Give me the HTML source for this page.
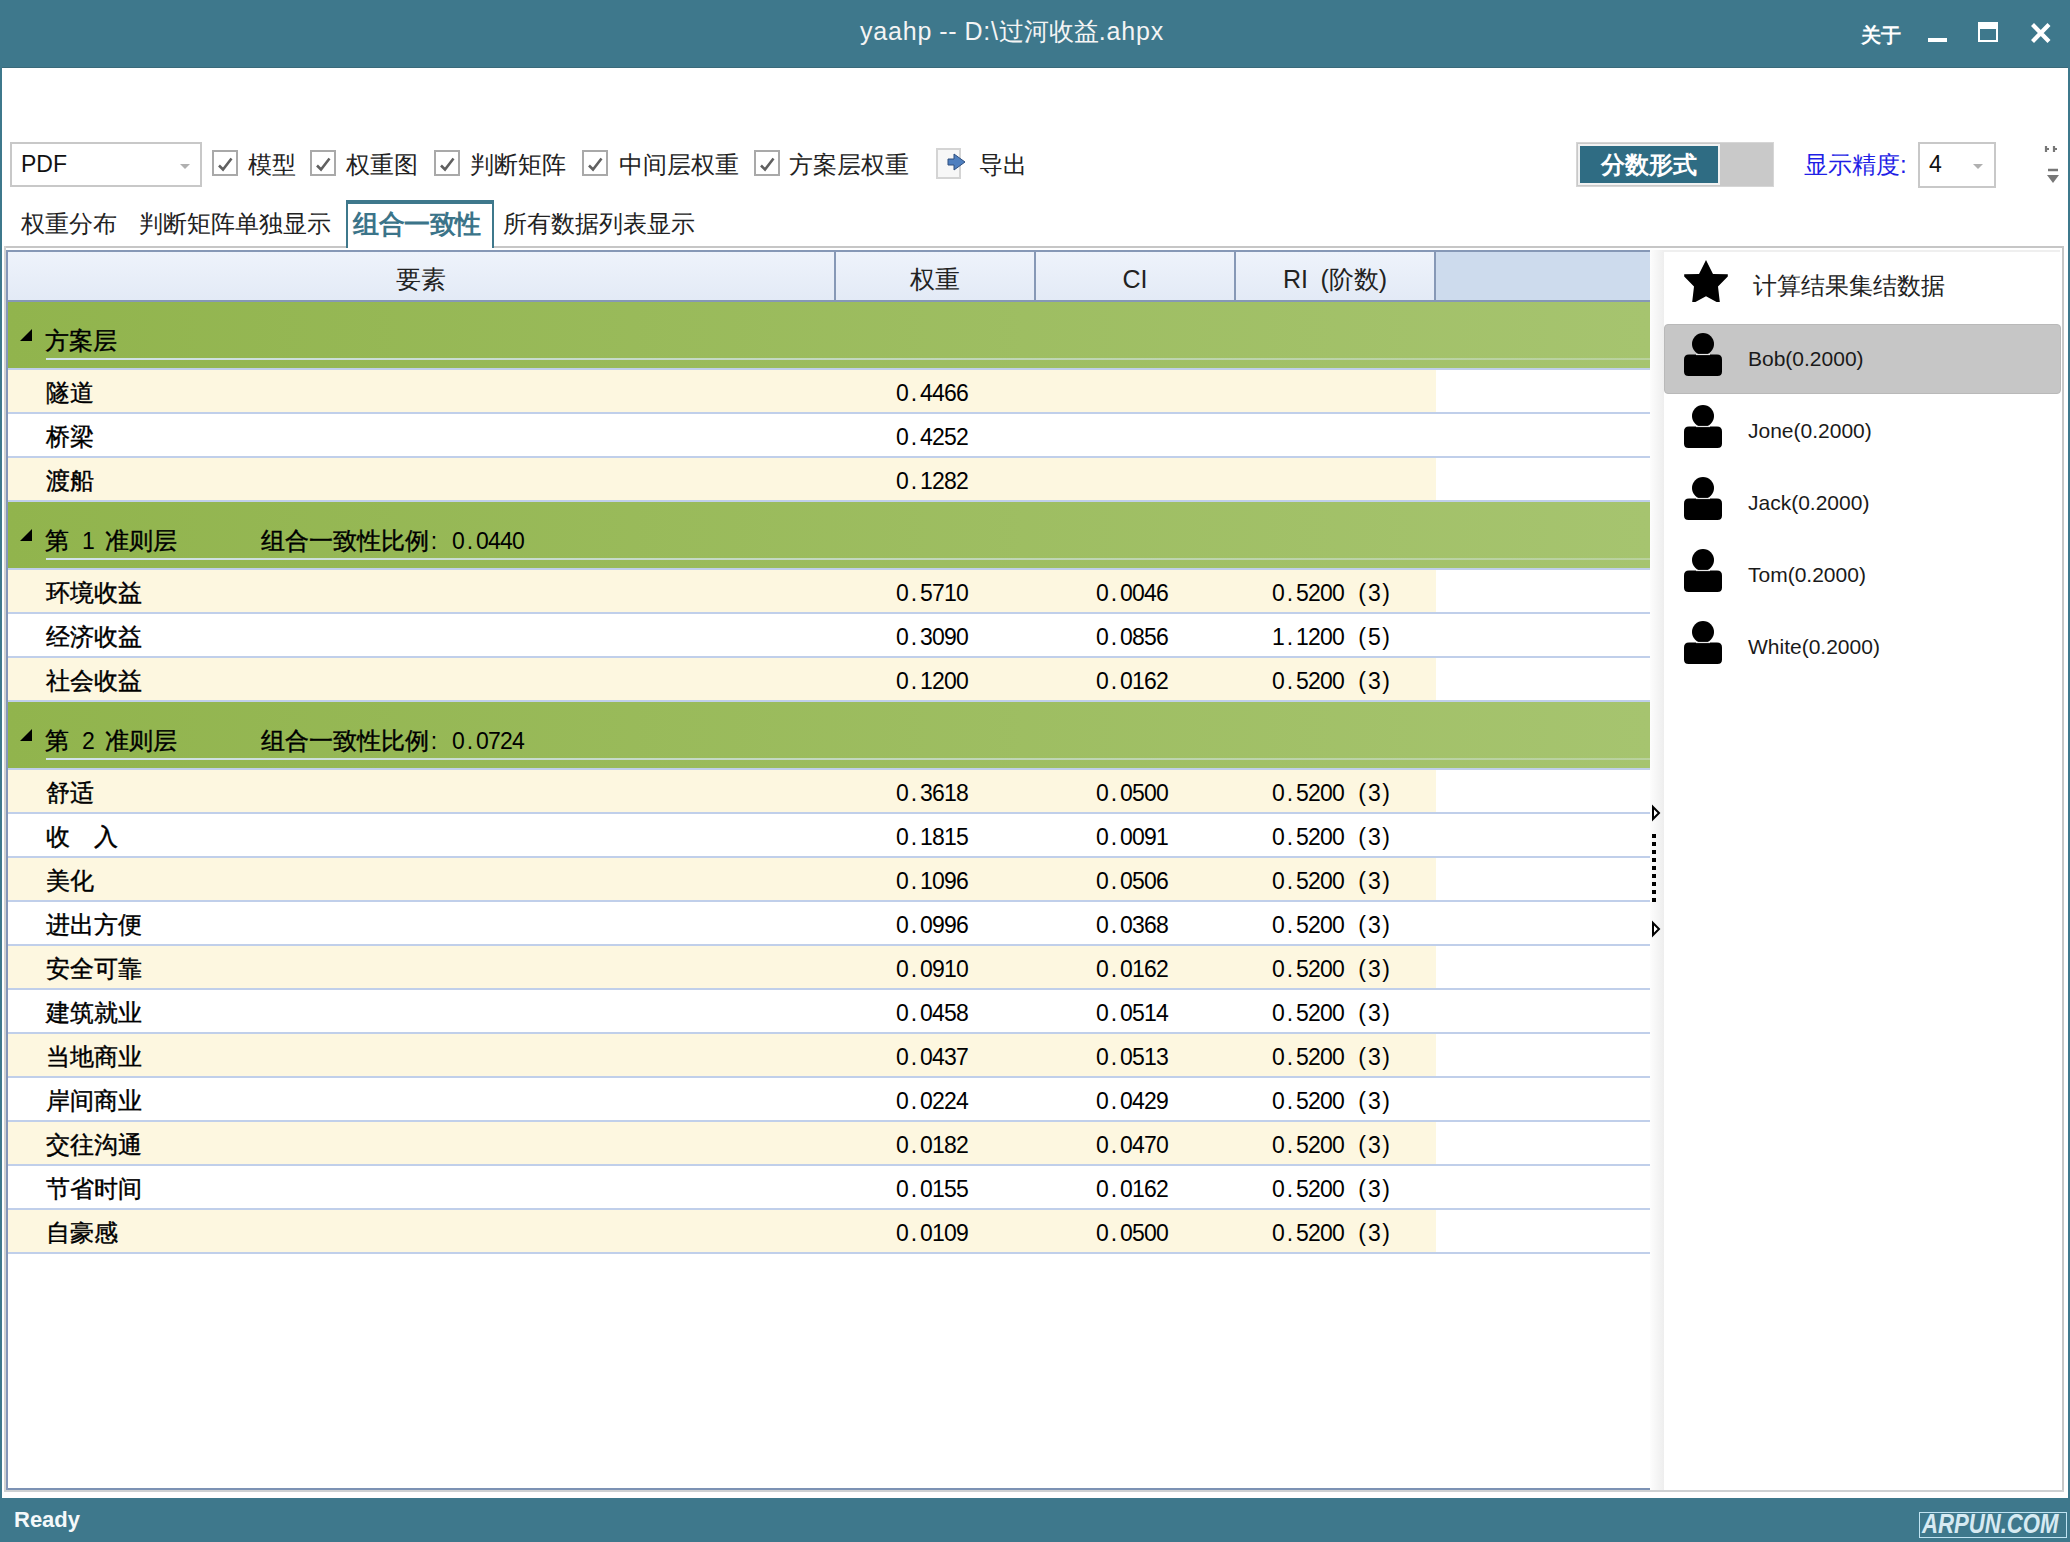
<!DOCTYPE html>
<html><head><meta charset="utf-8"><title>yaahp</title><style>
*{margin:0;padding:0}
html,body{width:2070px;height:1542px;overflow:hidden;background:#fff}
body{position:relative;font-family:"Liberation Sans",sans-serif;color:#000}
.b{position:absolute;display:block}
.t{position:absolute;white-space:nowrap;line-height:28px}
i{font-style:normal}
.k{display:inline-block;width:1em;text-align:center;transform:translateY(-1px) scale(1.55,1.36);-webkit-text-stroke:.5px currentColor}
.td .k,.num .k{-webkit-text-stroke:1px currentColor}
.cjk .k{transform:none;-webkit-text-stroke:0}
.cjk .td .k{transform:none;-webkit-text-stroke:.4px currentColor}
.sp{display:inline-block;width:.5em}
.title{color:#f4f4f4;font-size:25px;line-height:30px;letter-spacing:.8px}
.title .sp{width:.28em}
.tb{color:#fff;font-size:20px;font-weight:bold}
.pdf{font-size:23px;color:#111}
.tl{font-size:24px;color:#222}
.tog{font-size:24px;color:#fff;font-weight:bold}
.blue{font-size:24px;color:#1f1fe6}
.tab{font-size:24px;color:#222}
.tab.sel{color:#3b7489;font-weight:bold;font-size:25.6px}
.th{font-size:25px;color:#222}
.td{font-size:24px;color:#000}
.num{font-size:23px;color:#000}
.num b{display:inline-block;width:12px;text-align:center;font-weight:normal}
.rp{font-size:24px;color:#222}
.pn{font-size:21px;color:#1a1a1a}
.ready{font-size:22px;font-weight:bold;color:#f4f8fa}
.wm{font-size:27px;font-weight:bold;font-style:italic;color:#d6eaf2;line-height:26px;transform:scaleX(.82);transform-origin:0 0}
</style></head><body>
<div class="b" style="left:0px;top:0px;width:2070px;height:1542px;background:#3e788c"></div>
<div class="b" style="left:2px;top:68px;width:2066px;height:1430px;background:#fff"></div>
<div class="b" style="left:2px;top:67px;width:2066px;height:1px;background:#3a6a7a"></div>
<div class="t title" style="left:0;width:2024px;top:16px;text-align:center">yaahp<i class="sp"> </i>--<i class="sp"> </i>D:\<i class="k">过</i><i class="k">河</i><i class="k">收</i><i class="k">益</i>.ahpx</div>
<div class="t tb" style="left:1861px;top:21px;"><i class="k">关</i><i class="k">于</i></div>
<div class="b" style="left:1928px;top:38px;width:19px;height:4px;background:#fff"></div>
<div class="b" style="left:1978px;top:22px;width:20px;height:20px;border:2px solid #fff;border-top-width:7px;box-sizing:border-box"></div>
<svg class="b" style="left:2031px;top:23px" width="20" height="20" viewBox="0 0 20 20"><path d="M1.5 1.5 L18 18.5 M18 1.5 L1.5 18.5" stroke="#fff" stroke-width="4.2"/></svg>
<div class="b" style="left:10px;top:142px;width:192px;height:45px;border:2px solid #c8c8c8;box-sizing:border-box;background:#fff"></div>
<div class="t pdf" style="left:21px;top:150px;">PDF</div>
<svg class="b" style="left:179px;top:163px" width="12" height="7"><path d="M1 1 L11 1 L6 6 Z" fill="#b0b0b0"/></svg>
<div class="b" style="left:212px;top:150px;width:26px;height:26px;border:2px solid #a9a9a9;box-sizing:border-box;background:#fff"></div>
<svg class="b" style="left:212px;top:150px" width="26" height="26"><path d="M7 15.5 L11 19.5 L19.5 8.5" stroke="#606060" stroke-width="2.6" fill="none"/></svg>
<div class="t tl" style="left:248px;top:151px;"><i class="k">模</i><i class="k">型</i></div>
<div class="b" style="left:310px;top:150px;width:26px;height:26px;border:2px solid #a9a9a9;box-sizing:border-box;background:#fff"></div>
<svg class="b" style="left:310px;top:150px" width="26" height="26"><path d="M7 15.5 L11 19.5 L19.5 8.5" stroke="#606060" stroke-width="2.6" fill="none"/></svg>
<div class="t tl" style="left:346px;top:151px;"><i class="k">权</i><i class="k">重</i><i class="k">图</i></div>
<div class="b" style="left:434px;top:150px;width:26px;height:26px;border:2px solid #a9a9a9;box-sizing:border-box;background:#fff"></div>
<svg class="b" style="left:434px;top:150px" width="26" height="26"><path d="M7 15.5 L11 19.5 L19.5 8.5" stroke="#606060" stroke-width="2.6" fill="none"/></svg>
<div class="t tl" style="left:470px;top:151px;"><i class="k">判</i><i class="k">断</i><i class="k">矩</i><i class="k">阵</i></div>
<div class="b" style="left:582px;top:150px;width:26px;height:26px;border:2px solid #a9a9a9;box-sizing:border-box;background:#fff"></div>
<svg class="b" style="left:582px;top:150px" width="26" height="26"><path d="M7 15.5 L11 19.5 L19.5 8.5" stroke="#606060" stroke-width="2.6" fill="none"/></svg>
<div class="t tl" style="left:619px;top:151px;"><i class="k">中</i><i class="k">间</i><i class="k">层</i><i class="k">权</i><i class="k">重</i></div>
<div class="b" style="left:754px;top:150px;width:26px;height:26px;border:2px solid #a9a9a9;box-sizing:border-box;background:#fff"></div>
<svg class="b" style="left:754px;top:150px" width="26" height="26"><path d="M7 15.5 L11 19.5 L19.5 8.5" stroke="#606060" stroke-width="2.6" fill="none"/></svg>
<div class="t tl" style="left:789px;top:151px;"><i class="k">方</i><i class="k">案</i><i class="k">层</i><i class="k">权</i><i class="k">重</i></div>
<svg class="b" style="left:934px;top:146px" width="34" height="34"><path d="M3 3 H26 V32 H3 Z" fill="#f7f7f7" stroke="#d4d4d4" stroke-width="2"/><path d="M14 13 H20 V8 L31 16 L20 24 V19 H14 Z" fill="#4f7fbf" stroke="#2f4f7f" stroke-width="1"/></svg>
<div class="t tl" style="left:979px;top:151px;"><i class="k">导</i><i class="k">出</i></div>
<div class="b" style="left:1576px;top:142px;width:198px;height:45px;background:#c9c9c9;border:1px solid #d6d6d6;box-sizing:border-box"></div>
<div class="b" style="left:1578px;top:144px;width:142px;height:41px;background:#2f6c83;border:2px solid #f2f2f2;box-sizing:border-box"></div>
<div class="t tog" style="left:1580px;width:138px;top:151px;text-align:center"><i class="k">分</i><i class="k">数</i><i class="k">形</i><i class="k">式</i></div>
<div class="t blue" style="left:1804px;top:151px;"><i class="k">显</i><i class="k">示</i><i class="k">精</i><i class="k">度</i>:</div>
<div class="b" style="left:1918px;top:142px;width:78px;height:46px;border:2px solid #c8c8c8;box-sizing:border-box;background:#fff"></div>
<div class="t pdf" style="left:1929px;top:150px;">4</div>
<svg class="b" style="left:1972px;top:163px" width="12" height="7"><path d="M1 1 L11 1 L6 6 Z" fill="#b0b0b0"/></svg>
<svg class="b" style="left:2044px;top:144px" width="18" height="42"><path d="M2 2 V8 M2 5 H5 M10 2 V8 M10 5 H13" stroke="#777" stroke-width="2.2"/><path d="M4 26 H14" stroke="#777" stroke-width="2.5"/><path d="M3 31 H15 L9 39 Z" fill="#777"/></svg>
<div class="b" style="left:4px;top:246px;width:2060px;height:2px;background:#c6c6c6"></div>
<div class="b" style="left:1650px;top:250px;width:410px;height:2px;background:#efefef"></div>
<div class="b" style="left:4px;top:246px;width:2px;height:1246px;background:#d2d2d2"></div>
<div class="b" style="left:2062px;top:246px;width:2px;height:1246px;background:#c6c6c6"></div>
<div class="b" style="left:4px;top:1490px;width:2060px;height:2px;background:#cdd0d2"></div>
<div class="t tab" style="left:21px;top:210px;"><i class="k">权</i><i class="k">重</i><i class="k">分</i><i class="k">布</i></div>
<div class="t tab" style="left:139px;top:210px;"><i class="k">判</i><i class="k">断</i><i class="k">矩</i><i class="k">阵</i><i class="k">单</i><i class="k">独</i><i class="k">显</i><i class="k">示</i></div>
<div class="b" style="left:346px;top:200px;width:148px;height:48px;border:2px solid #3e788c;border-top-width:4px;border-bottom:0;box-sizing:border-box;background:#fff"></div>
<div class="t tab sel" style="left:353px;top:210px;"><i class="k">组</i><i class="k">合</i><i class="k">一</i><i class="k">致</i><i class="k">性</i></div>
<div class="t tab" style="left:503px;top:210px;"><i class="k">所</i><i class="k">有</i><i class="k">数</i><i class="k">据</i><i class="k">列</i><i class="k">表</i><i class="k">显</i><i class="k">示</i></div>
<div class="b" style="left:6px;top:250px;width:2px;height:1240px;background:#8496b8"></div>
<div class="b" style="left:6px;top:250px;width:1644px;height:2px;background:#8698b6"></div>
<div class="b" style="left:8px;top:252px;width:1642px;height:48px;background:linear-gradient(#eef3fb,#e3eaf6)"></div>
<div class="b" style="left:1436px;top:252px;width:214px;height:48px;background:#cddbed"></div>
<div class="b" style="left:834px;top:252px;width:2px;height:48px;background:#8698b6"></div>
<div class="b" style="left:1034px;top:252px;width:2px;height:48px;background:#8698b6"></div>
<div class="b" style="left:1234px;top:252px;width:2px;height:48px;background:#8698b6"></div>
<div class="b" style="left:1434px;top:252px;width:2px;height:48px;background:#8698b6"></div>
<div class="b" style="left:8px;top:300px;width:1642px;height:2px;background:#8698b6"></div>
<div class="t th" style="left:8px;width:826px;top:265px;text-align:center"><i class="k">要</i><i class="k">素</i></div>
<div class="t th" style="left:836px;width:198px;top:265px;text-align:center"><i class="k">权</i><i class="k">重</i></div>
<div class="t th" style="left:1036px;width:198px;top:265px;text-align:center">CI</div>
<div class="t th" style="left:1236px;width:198px;top:265px;text-align:center">RI<i class="sp"> </i>(<i class="k">阶</i><i class="k">数</i>)</div>
<div class="b" style="left:8px;top:1488px;width:1642px;height:2px;background:#7c92b4"></div>
<div class="b" style="left:8px;top:302px;width:1642px;height:66px;background:linear-gradient(90deg,#91b44d,#a6c46f)"></div>
<div class="b" style="left:46px;top:358px;width:1604px;height:2px;background:linear-gradient(90deg,#d3e3ea,rgba(220,235,240,.35))"></div>
<svg class="b" style="left:19px;top:328px" width="14" height="14"><path d="M13 1 V13 H1 Z" fill="#000"/></svg>
<div class="t td" style="left:45px;top:327px;"><i class="k">方</i><i class="k">案</i><i class="k">层</i></div>
<div class="b" style="left:8px;top:368px;width:1642px;height:2px;background:#c0cfea"></div>
<div class="b" style="left:8px;top:370px;width:1428px;height:42px;background:#fdf7e0"></div>
<div class="t td" style="left:46px;top:379px;"><i class="k">隧</i><i class="k">道</i></div>
<div class="t num" style="left:896px;top:379px"><b>0</b><b>.</b><b>4</b><b>4</b><b>6</b><b>6</b></div>
<div class="b" style="left:8px;top:412px;width:1642px;height:2px;background:#c0cfea"></div>
<div class="t td" style="left:46px;top:423px;"><i class="k">桥</i><i class="k">梁</i></div>
<div class="t num" style="left:896px;top:423px"><b>0</b><b>.</b><b>4</b><b>2</b><b>5</b><b>2</b></div>
<div class="b" style="left:8px;top:456px;width:1642px;height:2px;background:#c0cfea"></div>
<div class="b" style="left:8px;top:458px;width:1428px;height:42px;background:#fdf7e0"></div>
<div class="t td" style="left:46px;top:467px;"><i class="k">渡</i><i class="k">船</i></div>
<div class="t num" style="left:896px;top:467px"><b>0</b><b>.</b><b>1</b><b>2</b><b>8</b><b>2</b></div>
<div class="b" style="left:8px;top:500px;width:1642px;height:2px;background:#c0cfea"></div>
<div class="b" style="left:8px;top:502px;width:1642px;height:66px;background:linear-gradient(90deg,#91b44d,#a6c46f)"></div>
<div class="b" style="left:46px;top:558px;width:1604px;height:2px;background:linear-gradient(90deg,#d3e3ea,rgba(220,235,240,.35))"></div>
<svg class="b" style="left:19px;top:528px" width="14" height="14"><path d="M13 1 V13 H1 Z" fill="#000"/></svg>
<div class="t td" style="left:45px;top:527px;"><i class="k">第</i></div>
<div class="t num" style="left:70px;top:527px"><b>&nbsp;</b><b>1</b><b>&nbsp;</b></div>
<div class="t td" style="left:105px;top:527px;"><i class="k">准</i><i class="k">则</i><i class="k">层</i></div>
<div class="t td" style="left:261px;top:527px;"><i class="k">组</i><i class="k">合</i><i class="k">一</i><i class="k">致</i><i class="k">性</i><i class="k">比</i><i class="k">例</i></div>
<div class="t num" style="left:428px;top:527px"><b>:</b><b>&nbsp;</b><b>0</b><b>.</b><b>0</b><b>4</b><b>4</b><b>0</b></div>
<div class="b" style="left:8px;top:568px;width:1642px;height:2px;background:#c0cfea"></div>
<div class="b" style="left:8px;top:570px;width:1428px;height:42px;background:#fdf7e0"></div>
<div class="t td" style="left:46px;top:579px;"><i class="k">环</i><i class="k">境</i><i class="k">收</i><i class="k">益</i></div>
<div class="t num" style="left:896px;top:579px"><b>0</b><b>.</b><b>5</b><b>7</b><b>1</b><b>0</b></div>
<div class="t num" style="left:1096px;top:579px"><b>0</b><b>.</b><b>0</b><b>0</b><b>4</b><b>6</b></div>
<div class="t num" style="left:1272px;top:579px"><b>0</b><b>.</b><b>5</b><b>2</b><b>0</b><b>0</b><b>&nbsp;</b><b>(</b><b>3</b><b>)</b></div>
<div class="b" style="left:8px;top:612px;width:1642px;height:2px;background:#c0cfea"></div>
<div class="t td" style="left:46px;top:623px;"><i class="k">经</i><i class="k">济</i><i class="k">收</i><i class="k">益</i></div>
<div class="t num" style="left:896px;top:623px"><b>0</b><b>.</b><b>3</b><b>0</b><b>9</b><b>0</b></div>
<div class="t num" style="left:1096px;top:623px"><b>0</b><b>.</b><b>0</b><b>8</b><b>5</b><b>6</b></div>
<div class="t num" style="left:1272px;top:623px"><b>1</b><b>.</b><b>1</b><b>2</b><b>0</b><b>0</b><b>&nbsp;</b><b>(</b><b>5</b><b>)</b></div>
<div class="b" style="left:8px;top:656px;width:1642px;height:2px;background:#c0cfea"></div>
<div class="b" style="left:8px;top:658px;width:1428px;height:42px;background:#fdf7e0"></div>
<div class="t td" style="left:46px;top:667px;"><i class="k">社</i><i class="k">会</i><i class="k">收</i><i class="k">益</i></div>
<div class="t num" style="left:896px;top:667px"><b>0</b><b>.</b><b>1</b><b>2</b><b>0</b><b>0</b></div>
<div class="t num" style="left:1096px;top:667px"><b>0</b><b>.</b><b>0</b><b>1</b><b>6</b><b>2</b></div>
<div class="t num" style="left:1272px;top:667px"><b>0</b><b>.</b><b>5</b><b>2</b><b>0</b><b>0</b><b>&nbsp;</b><b>(</b><b>3</b><b>)</b></div>
<div class="b" style="left:8px;top:700px;width:1642px;height:2px;background:#c0cfea"></div>
<div class="b" style="left:8px;top:702px;width:1642px;height:66px;background:linear-gradient(90deg,#91b44d,#a6c46f)"></div>
<div class="b" style="left:46px;top:758px;width:1604px;height:2px;background:linear-gradient(90deg,#d3e3ea,rgba(220,235,240,.35))"></div>
<svg class="b" style="left:19px;top:728px" width="14" height="14"><path d="M13 1 V13 H1 Z" fill="#000"/></svg>
<div class="t td" style="left:45px;top:727px;"><i class="k">第</i></div>
<div class="t num" style="left:70px;top:727px"><b>&nbsp;</b><b>2</b><b>&nbsp;</b></div>
<div class="t td" style="left:105px;top:727px;"><i class="k">准</i><i class="k">则</i><i class="k">层</i></div>
<div class="t td" style="left:261px;top:727px;"><i class="k">组</i><i class="k">合</i><i class="k">一</i><i class="k">致</i><i class="k">性</i><i class="k">比</i><i class="k">例</i></div>
<div class="t num" style="left:428px;top:727px"><b>:</b><b>&nbsp;</b><b>0</b><b>.</b><b>0</b><b>7</b><b>2</b><b>4</b></div>
<div class="b" style="left:8px;top:768px;width:1642px;height:2px;background:#c0cfea"></div>
<div class="b" style="left:8px;top:770px;width:1428px;height:42px;background:#fdf7e0"></div>
<div class="t td" style="left:46px;top:779px;"><i class="k">舒</i><i class="k">适</i></div>
<div class="t num" style="left:896px;top:779px"><b>0</b><b>.</b><b>3</b><b>6</b><b>1</b><b>8</b></div>
<div class="t num" style="left:1096px;top:779px"><b>0</b><b>.</b><b>0</b><b>5</b><b>0</b><b>0</b></div>
<div class="t num" style="left:1272px;top:779px"><b>0</b><b>.</b><b>5</b><b>2</b><b>0</b><b>0</b><b>&nbsp;</b><b>(</b><b>3</b><b>)</b></div>
<div class="b" style="left:8px;top:812px;width:1642px;height:2px;background:#c0cfea"></div>
<div class="t td" style="left:46px;top:823px;"><i class="k">收</i><i class="k">　</i><i class="k">入</i></div>
<div class="t num" style="left:896px;top:823px"><b>0</b><b>.</b><b>1</b><b>8</b><b>1</b><b>5</b></div>
<div class="t num" style="left:1096px;top:823px"><b>0</b><b>.</b><b>0</b><b>0</b><b>9</b><b>1</b></div>
<div class="t num" style="left:1272px;top:823px"><b>0</b><b>.</b><b>5</b><b>2</b><b>0</b><b>0</b><b>&nbsp;</b><b>(</b><b>3</b><b>)</b></div>
<div class="b" style="left:8px;top:856px;width:1642px;height:2px;background:#c0cfea"></div>
<div class="b" style="left:8px;top:858px;width:1428px;height:42px;background:#fdf7e0"></div>
<div class="t td" style="left:46px;top:867px;"><i class="k">美</i><i class="k">化</i></div>
<div class="t num" style="left:896px;top:867px"><b>0</b><b>.</b><b>1</b><b>0</b><b>9</b><b>6</b></div>
<div class="t num" style="left:1096px;top:867px"><b>0</b><b>.</b><b>0</b><b>5</b><b>0</b><b>6</b></div>
<div class="t num" style="left:1272px;top:867px"><b>0</b><b>.</b><b>5</b><b>2</b><b>0</b><b>0</b><b>&nbsp;</b><b>(</b><b>3</b><b>)</b></div>
<div class="b" style="left:8px;top:900px;width:1642px;height:2px;background:#c0cfea"></div>
<div class="t td" style="left:46px;top:911px;"><i class="k">进</i><i class="k">出</i><i class="k">方</i><i class="k">便</i></div>
<div class="t num" style="left:896px;top:911px"><b>0</b><b>.</b><b>0</b><b>9</b><b>9</b><b>6</b></div>
<div class="t num" style="left:1096px;top:911px"><b>0</b><b>.</b><b>0</b><b>3</b><b>6</b><b>8</b></div>
<div class="t num" style="left:1272px;top:911px"><b>0</b><b>.</b><b>5</b><b>2</b><b>0</b><b>0</b><b>&nbsp;</b><b>(</b><b>3</b><b>)</b></div>
<div class="b" style="left:8px;top:944px;width:1642px;height:2px;background:#c0cfea"></div>
<div class="b" style="left:8px;top:946px;width:1428px;height:42px;background:#fdf7e0"></div>
<div class="t td" style="left:46px;top:955px;"><i class="k">安</i><i class="k">全</i><i class="k">可</i><i class="k">靠</i></div>
<div class="t num" style="left:896px;top:955px"><b>0</b><b>.</b><b>0</b><b>9</b><b>1</b><b>0</b></div>
<div class="t num" style="left:1096px;top:955px"><b>0</b><b>.</b><b>0</b><b>1</b><b>6</b><b>2</b></div>
<div class="t num" style="left:1272px;top:955px"><b>0</b><b>.</b><b>5</b><b>2</b><b>0</b><b>0</b><b>&nbsp;</b><b>(</b><b>3</b><b>)</b></div>
<div class="b" style="left:8px;top:988px;width:1642px;height:2px;background:#c0cfea"></div>
<div class="t td" style="left:46px;top:999px;"><i class="k">建</i><i class="k">筑</i><i class="k">就</i><i class="k">业</i></div>
<div class="t num" style="left:896px;top:999px"><b>0</b><b>.</b><b>0</b><b>4</b><b>5</b><b>8</b></div>
<div class="t num" style="left:1096px;top:999px"><b>0</b><b>.</b><b>0</b><b>5</b><b>1</b><b>4</b></div>
<div class="t num" style="left:1272px;top:999px"><b>0</b><b>.</b><b>5</b><b>2</b><b>0</b><b>0</b><b>&nbsp;</b><b>(</b><b>3</b><b>)</b></div>
<div class="b" style="left:8px;top:1032px;width:1642px;height:2px;background:#c0cfea"></div>
<div class="b" style="left:8px;top:1034px;width:1428px;height:42px;background:#fdf7e0"></div>
<div class="t td" style="left:46px;top:1043px;"><i class="k">当</i><i class="k">地</i><i class="k">商</i><i class="k">业</i></div>
<div class="t num" style="left:896px;top:1043px"><b>0</b><b>.</b><b>0</b><b>4</b><b>3</b><b>7</b></div>
<div class="t num" style="left:1096px;top:1043px"><b>0</b><b>.</b><b>0</b><b>5</b><b>1</b><b>3</b></div>
<div class="t num" style="left:1272px;top:1043px"><b>0</b><b>.</b><b>5</b><b>2</b><b>0</b><b>0</b><b>&nbsp;</b><b>(</b><b>3</b><b>)</b></div>
<div class="b" style="left:8px;top:1076px;width:1642px;height:2px;background:#c0cfea"></div>
<div class="t td" style="left:46px;top:1087px;"><i class="k">岸</i><i class="k">间</i><i class="k">商</i><i class="k">业</i></div>
<div class="t num" style="left:896px;top:1087px"><b>0</b><b>.</b><b>0</b><b>2</b><b>2</b><b>4</b></div>
<div class="t num" style="left:1096px;top:1087px"><b>0</b><b>.</b><b>0</b><b>4</b><b>2</b><b>9</b></div>
<div class="t num" style="left:1272px;top:1087px"><b>0</b><b>.</b><b>5</b><b>2</b><b>0</b><b>0</b><b>&nbsp;</b><b>(</b><b>3</b><b>)</b></div>
<div class="b" style="left:8px;top:1120px;width:1642px;height:2px;background:#c0cfea"></div>
<div class="b" style="left:8px;top:1122px;width:1428px;height:42px;background:#fdf7e0"></div>
<div class="t td" style="left:46px;top:1131px;"><i class="k">交</i><i class="k">往</i><i class="k">沟</i><i class="k">通</i></div>
<div class="t num" style="left:896px;top:1131px"><b>0</b><b>.</b><b>0</b><b>1</b><b>8</b><b>2</b></div>
<div class="t num" style="left:1096px;top:1131px"><b>0</b><b>.</b><b>0</b><b>4</b><b>7</b><b>0</b></div>
<div class="t num" style="left:1272px;top:1131px"><b>0</b><b>.</b><b>5</b><b>2</b><b>0</b><b>0</b><b>&nbsp;</b><b>(</b><b>3</b><b>)</b></div>
<div class="b" style="left:8px;top:1164px;width:1642px;height:2px;background:#c0cfea"></div>
<div class="t td" style="left:46px;top:1175px;"><i class="k">节</i><i class="k">省</i><i class="k">时</i><i class="k">间</i></div>
<div class="t num" style="left:896px;top:1175px"><b>0</b><b>.</b><b>0</b><b>1</b><b>5</b><b>5</b></div>
<div class="t num" style="left:1096px;top:1175px"><b>0</b><b>.</b><b>0</b><b>1</b><b>6</b><b>2</b></div>
<div class="t num" style="left:1272px;top:1175px"><b>0</b><b>.</b><b>5</b><b>2</b><b>0</b><b>0</b><b>&nbsp;</b><b>(</b><b>3</b><b>)</b></div>
<div class="b" style="left:8px;top:1208px;width:1642px;height:2px;background:#c0cfea"></div>
<div class="b" style="left:8px;top:1210px;width:1428px;height:42px;background:#fdf7e0"></div>
<div class="t td" style="left:46px;top:1219px;"><i class="k">自</i><i class="k">豪</i><i class="k">感</i></div>
<div class="t num" style="left:896px;top:1219px"><b>0</b><b>.</b><b>0</b><b>1</b><b>0</b><b>9</b></div>
<div class="t num" style="left:1096px;top:1219px"><b>0</b><b>.</b><b>0</b><b>5</b><b>0</b><b>0</b></div>
<div class="t num" style="left:1272px;top:1219px"><b>0</b><b>.</b><b>5</b><b>2</b><b>0</b><b>0</b><b>&nbsp;</b><b>(</b><b>3</b><b>)</b></div>
<div class="b" style="left:8px;top:1252px;width:1642px;height:2px;background:#c0cfea"></div>
<div class="b" style="left:1650px;top:250px;width:14px;height:1240px;background:linear-gradient(90deg,#fdfdfd,#eeeeee)"></div>
<svg class="b" style="left:1650px;top:800px" width="14" height="140"><path d="M3 7 L9 13 L3 19 Z" fill="#fff" stroke="#000" stroke-width="2"/><path d="M4 34 V102" stroke="#000" stroke-width="4" stroke-dasharray="4 4"/><path d="M3 123 L9 129 L3 135 Z" fill="#fff" stroke="#000" stroke-width="2"/></svg>
<svg class="b" style="left:1684px;top:259px" width="44" height="44"><path d="M22 1 L29 15 L43.8 15.3 L43.8 17.6 L34 27.4 L35.8 43 L32.6 43 L22 37.2 L11.4 43 L8.2 43 L10 27.4 L0.2 17.6 L0.2 15.3 L15 15 Z" fill="#000"/></svg>
<div class="t rp" style="left:1753px;top:272px;"><i class="k">计</i><i class="k">算</i><i class="k">结</i><i class="k">果</i><i class="k">集</i><i class="k">结</i><i class="k">数</i><i class="k">据</i></div>
<div class="b" style="left:1664px;top:324px;width:397px;height:70px;background:#c6c6c6;border:1px solid #b9b9b9;border-radius:4px;box-sizing:border-box"></div>
<svg class="b" style="left:1684px;top:333px" width="38" height="43"><circle cx="19" cy="11" r="11" fill="#000"/><path d="M5 21.5 H33 Q38 21.5 38 26.5 V38.5 Q38 43 33.5 43 H4.5 Q0 43 0 38.5 V26.5 Q0 21.5 5 21.5 Z" fill="#000"/><path d="M12 21.5 H26" stroke="#e8e8e8" stroke-width="1.2"/></svg>
<div class="t pn" style="left:1748px;top:345px;">Bob(0.2000)</div>
<svg class="b" style="left:1684px;top:405px" width="38" height="43"><circle cx="19" cy="11" r="11" fill="#000"/><path d="M5 21.5 H33 Q38 21.5 38 26.5 V38.5 Q38 43 33.5 43 H4.5 Q0 43 0 38.5 V26.5 Q0 21.5 5 21.5 Z" fill="#000"/><path d="M12 21.5 H26" stroke="#e8e8e8" stroke-width="1.2"/></svg>
<div class="t pn" style="left:1748px;top:417px;">Jone(0.2000)</div>
<svg class="b" style="left:1684px;top:477px" width="38" height="43"><circle cx="19" cy="11" r="11" fill="#000"/><path d="M5 21.5 H33 Q38 21.5 38 26.5 V38.5 Q38 43 33.5 43 H4.5 Q0 43 0 38.5 V26.5 Q0 21.5 5 21.5 Z" fill="#000"/><path d="M12 21.5 H26" stroke="#e8e8e8" stroke-width="1.2"/></svg>
<div class="t pn" style="left:1748px;top:489px;">Jack(0.2000)</div>
<svg class="b" style="left:1684px;top:549px" width="38" height="43"><circle cx="19" cy="11" r="11" fill="#000"/><path d="M5 21.5 H33 Q38 21.5 38 26.5 V38.5 Q38 43 33.5 43 H4.5 Q0 43 0 38.5 V26.5 Q0 21.5 5 21.5 Z" fill="#000"/><path d="M12 21.5 H26" stroke="#e8e8e8" stroke-width="1.2"/></svg>
<div class="t pn" style="left:1748px;top:561px;">Tom(0.2000)</div>
<svg class="b" style="left:1684px;top:621px" width="38" height="43"><circle cx="19" cy="11" r="11" fill="#000"/><path d="M5 21.5 H33 Q38 21.5 38 26.5 V38.5 Q38 43 33.5 43 H4.5 Q0 43 0 38.5 V26.5 Q0 21.5 5 21.5 Z" fill="#000"/><path d="M12 21.5 H26" stroke="#e8e8e8" stroke-width="1.2"/></svg>
<div class="t pn" style="left:1748px;top:633px;">White(0.2000)</div>
<div class="t ready" style="left:14px;top:1506px;">Ready</div>
<div class="b" style="left:1919px;top:1512px;width:148px;height:26px;border:1px solid #bfe3f2;box-sizing:border-box"></div>
<div class="t wm" style="left:1922px;top:1511px;">ARPUN.COM</div>
<script>(function(){var s=document.createElement("span");s.style.cssText="position:absolute;left:0;top:0;font-size:100px;visibility:hidden;white-space:nowrap";s.textContent="\u6743\u91cd";document.body.appendChild(s);if(s.getBoundingClientRect().width>180)document.body.className="cjk";document.body.removeChild(s);})();</script>
</body></html>
